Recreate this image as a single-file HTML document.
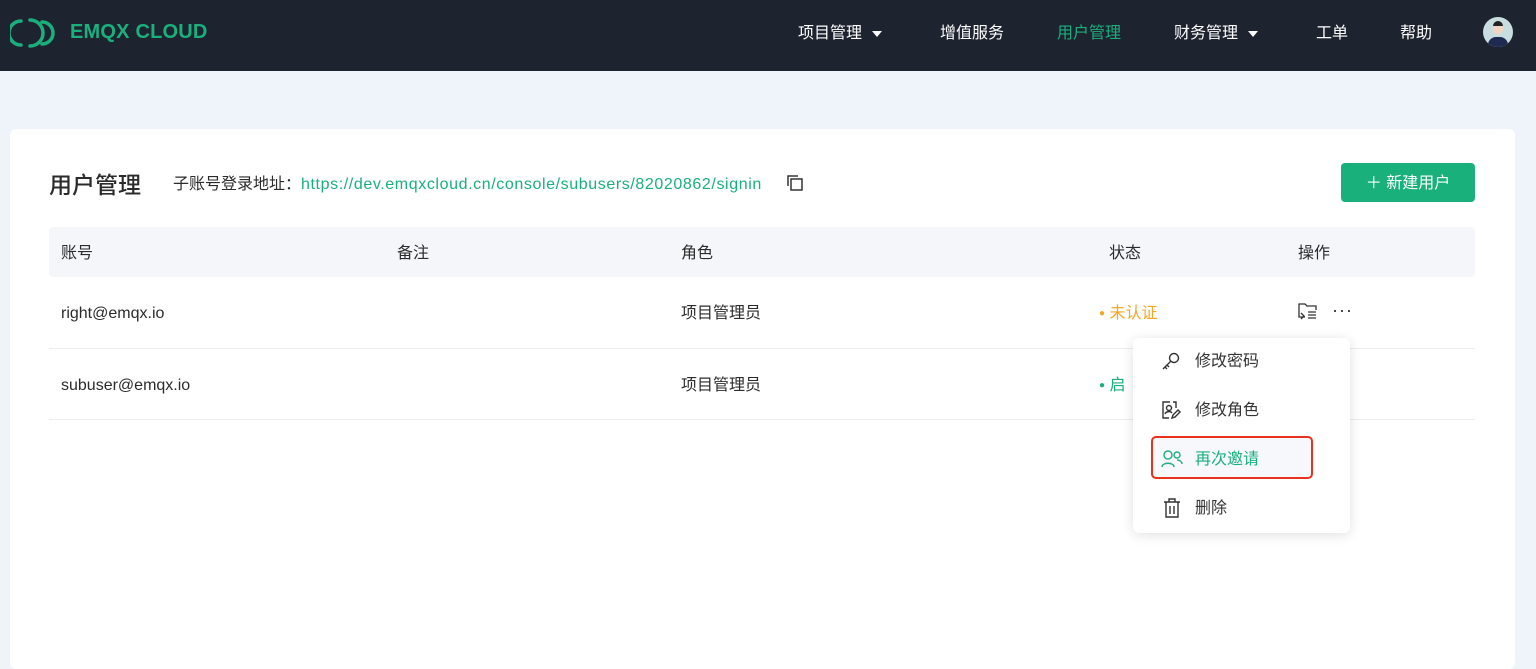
<!DOCTYPE html>
<html><head><meta charset="utf-8"><style>
*{margin:0;padding:0;box-sizing:border-box}
body{width:1536px;height:662px;overflow:hidden;background:#eff3fa;font-family:"Liberation Sans","Noto Sans CJK SC",sans-serif;color:#2b2b2b;position:relative;line-height:20px}
.nav{position:absolute;left:0;top:0;width:1536px;height:71px;background:#1e2330}
.nav .logo{position:absolute;left:70px;top:20px;color:#1ab07c;font-size:20px;line-height:24px;font-weight:bold;letter-spacing:0.2px}
.nav .it{position:absolute;top:24px;color:#fff;font-size:16px;line-height:20px}
.tri{display:inline-block;border-left:5px solid transparent;border-right:5px solid transparent;border-top:6px solid #fff;margin-left:10px;vertical-align:middle}
.card{position:absolute;left:10px;top:129px;width:1505px;height:540px;background:#fff;border-radius:6px}
.abs{position:absolute}
.th{position:absolute;left:49px;top:227px;width:1426px;height:50px;background:#f4f6fa;border-radius:4px}
.row{position:absolute;left:49px;width:1426px;border-bottom:1px solid #ececec}
.t{position:absolute;font-size:16px;line-height:20px}
.menu{position:absolute;left:1133px;top:338px;width:217px;height:195px;background:#fff;border-radius:6px;box-shadow:0 2px 12px rgba(0,0,0,.12)}
.mi{position:absolute;left:62px;font-size:16px;line-height:20px;color:#333}
</style></head><body>
<div class="nav">
<svg class="abs" style="left:10px;top:17px" width="50" height="32" viewBox="0 0 50 32" fill="none" stroke="#1ab07c" stroke-width="3.5" stroke-linecap="round"><path d="M11 4 A12 12 0 0 0 11 28"/><path d="M20 3 A13 13 0 0 1 20 29"/><path d="M32 5 A11 11 0 0 1 32 27"/></svg>
<div class="logo">EMQX CLOUD</div>
<div class="it" style="left:798px">项目管理<span class="tri"></span></div>
<div class="it" style="left:940px">增值服务</div>
<div class="it" style="left:1057px;color:#1ab07c">用户管理</div>
<div class="it" style="left:1174px">财务管理<span class="tri"></span></div>
<div class="it" style="left:1316px">工单</div>
<div class="it" style="left:1400px">帮助</div>
<div class="abs" style="left:1483px;top:17px;width:30px;height:30px;border-radius:50%;background:radial-gradient(circle at 50% 40%,#f0d5c5 0 22%,#c8dde0 23%);overflow:hidden"><div style="position:absolute;left:5px;top:20px;width:20px;height:12px;background:#1e2a50;border-radius:8px 8px 0 0"></div><div style="position:absolute;left:10px;top:4px;width:10px;height:5px;background:#222;border-radius:5px 5px 0 0"></div></div>
</div>
<div class="card"></div>
<div class="t" style="left:49px;top:171px;font-size:23px;line-height:28px;font-weight:500">用户管理</div>
<div class="t" style="left:173px;top:175px;font-size:16px">子账号登录地址：<span style="color:#1ab07c;letter-spacing:0.6px">https://dev.emqxcloud.cn/console/subusers/82020862/signin</span></div>
<svg class="abs" style="left:786px;top:174px" width="18" height="18" viewBox="0 0 18 18" fill="none" stroke="#333" stroke-width="1.5"><rect x="5" y="5" width="11" height="11"/><path d="M2 12V2h10"/></svg>
<div class="abs" style="left:1341px;top:163px;width:134px;height:39px;background:#1ab07c;border-radius:4px;color:#fff;font-size:16px;line-height:41px;text-align:center">＋ 新建用户</div>
<div class="th"></div>
<div class="t" style="left:61px;top:244px">账号</div>
<div class="t" style="left:397px;top:244px">备注</div>
<div class="t" style="left:681px;top:244px">角色</div>
<div class="t" style="left:1109px;top:244px">状态</div>
<div class="t" style="left:1298px;top:244px">操作</div>
<div class="row" style="top:277px;height:72px"></div>
<div class="row" style="top:349px;height:71px"></div>
<div class="t" style="left:61px;top:304px">right@emqx.io</div>
<div class="t" style="left:681px;top:304px">项目管理员</div>
<div class="t" style="left:1099px;top:304px;color:#f5a623"><span style="font-size:10px;vertical-align:middle">●</span> 未认证</div>
<svg class="abs" style="left:1298px;top:302px" width="20" height="18" viewBox="0 0 20 18" fill="none" stroke="#333" stroke-width="1.3"><path d="M1 5V2h6l2 2h9v4M1 5v10h6M10 10h8M10 13h8M10 16h8M3 11l3 3-3 3"/></svg>
<div class="t" style="left:1332px;top:300px;font-size:18px;letter-spacing:1px">···</div>
<div class="t" style="left:61px;top:376px">subuser@emqx.io</div>
<div class="t" style="left:681px;top:376px">项目管理员</div>
<div class="t" style="left:1099px;top:376px;color:#1ab07c"><span style="font-size:10px;vertical-align:middle">●</span> 启</div>
<div class="menu">
<svg class="abs" style="left:28px;top:13px" width="20" height="20" viewBox="0 0 20 20" fill="none" stroke="#333" stroke-width="1.4"><circle cx="13" cy="7" r="4.5"/><path d="M10 10L2 18M4 16l2 2M6 14l2 2"/></svg>
<div class="mi" style="top:14px">修改密码</div>
<svg class="abs" style="left:28px;top:62px" width="20" height="20" viewBox="0 0 20 20" fill="none" stroke="#333" stroke-width="1.4"><path d="M9 2H2v16h6M12 2h3v6"/><circle cx="8" cy="8" r="2.5"/><path d="M4 14c1-3 6-3 7-1M11 18l1-3 5-5 2 2-5 5z"/></svg>
<div class="mi" style="top:63px">修改角色</div>
<div class="abs" style="left:18px;top:98px;width:162px;height:43px;border:2.5px solid #e8321e;border-radius:5px;background:#f6f8fc"></div>
<svg class="abs" style="left:28px;top:111px" width="22" height="20" viewBox="0 0 22 20" fill="none" stroke="#1ab07c" stroke-width="1.4"><circle cx="7" cy="6" r="4"/><path d="M1 18c0-5 12-5 12 0"/><circle cx="16" cy="6" r="3"/><path d="M16 11c3 0 5 2 5 4"/></svg>
<div class="mi" style="top:112px;color:#1ab07c">再次邀请</div>
<svg class="abs" style="left:30px;top:160px" width="18" height="20" viewBox="0 0 18 20" fill="none" stroke="#333" stroke-width="1.4"><path d="M1 4h16M6 4V1h6v3M3 4v15h12V4M7 8v8M11 8v8"/></svg>
<div class="mi" style="top:161px">删除</div>
</div>
</body></html>
